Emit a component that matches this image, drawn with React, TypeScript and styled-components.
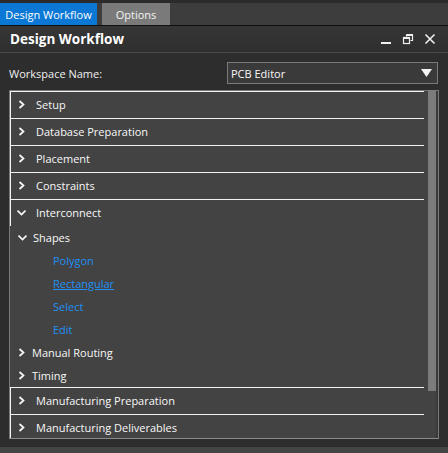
import React from "react";
import styled, { createGlobalStyle } from "styled-components";

const Global = createGlobalStyle`
  html, body { margin: 0; padding: 0; background: #2d2d2d; }
  body { font-family: "Open Sans", "Noto Sans", sans-serif; color: #f0f0f0; }
  * { box-sizing: border-box; }
`;

const Page = styled.div`
  width: 448px;
  height: 453px;
  display: flex;
  flex-direction: column;
  background: #2d2d2d;
  overflow: hidden;
`;

const TabStrip = styled.div`
  padding-top: 3px;
  background: #2b2b2b;
`;

const TabRow = styled.div`
  height: 23px;
  display: flex;
  gap: 5px;
  background: #3d3d3d;
  border-bottom: 1px solid #101010;
`;

const Tab = styled.div<{ $active?: boolean; $w: number }>`
  width: ${(p) => p.$w}px;
  height: 22px;
  display: flex;
  align-items: center;
  justify-content: center;
  font-size: 11px;
  color: ${(p) => (p.$active ? "#ffffff" : "#f4f4f4")};
  background: ${(p) => (p.$active ? "#0a78d4" : "#7a7a7a")};
`;

const Header = styled.div`
  height: 27px;
  display: flex;
  align-items: center;
  padding: 0 10px;
  background: linear-gradient(#363636, #2f2f2f);
  border-bottom: 1px solid #4a4a4a;
`;

const Title = styled.div`
  flex: 1;
  font-size: 13.5px;
  font-weight: 700;
  color: #ffffff;
`;

const WinButtons = styled.div`
  display: flex;
  align-items: center;
  gap: 10px;
  margin-right: 2px;
`;

const WinBtn = styled.svg`
  width: 12px;
  height: 12px;
  display: block;
`;

const WorkspaceRow = styled.div`
  display: flex;
  align-items: center;
  justify-content: space-between;
  padding: 9px 10px 0 9px;
  height: 31px;
`;

const Label = styled.div`
  font-size: 11px;
  color: #f0f0f0;
`;

const Select = styled.div`
  width: 211px;
  height: 22px;
  border: 1px solid #7a7a7a;
  background: #3a3a3a;
  display: flex;
  align-items: center;
  justify-content: space-between;
  padding: 0 5px 0 3px;
  font-size: 11px;
  color: #f8f8f8;
`;

const Panel = styled.div`
  margin: 6px 9px 0 9px;
  height: 349px;
  border: 1px solid #7a7a7a;
  border-bottom-color: #8a8a8a;
  background: #434343;
  display: flex;
  overflow: hidden;
`;

const List = styled.div`
  flex: 1;
  display: flex;
  flex-direction: column;
`;

const TopRow = styled.div`
  height: 27px;
  flex: none;
  margin-right: 2px;
  border-top: 1px solid #f2f2f2;
  border-left: 1px solid #f2f2f2;
  display: flex;
  align-items: center;
  padding-left: 6px;
  padding-bottom: 1px;
  font-size: 11px;
  color: #f8f8f8;
`;

const SubRow = styled.div<{ $indent: number }>`
  height: 23px;
  flex: none;
  display: flex;
  align-items: center;
  padding-left: ${(p) => p.$indent}px;
  font-size: 11px;
  color: #f8f8f8;
`;

const Chevron = styled.svg<{ $gap: number }>`
  width: 9px;
  height: 9px;
  flex: none;
  margin-right: ${(p) => p.$gap}px;
  display: block;
`;

const LinkRow = styled.div`
  height: 23px;
  flex: none;
  display: flex;
  align-items: center;
  padding-left: 43px;
`;

const Link = styled.span<{ $underline?: boolean }>`
  font-size: 11px;
  color: #2090f4;
  text-decoration: ${(p) => (p.$underline ? "underline" : "none")};
`;

const Track = styled.div`
  width: 12px;
  flex: none;
  display: flex;
  padding-left: 2px;
  border-right: 2px solid #3a3a3a;
`;

const Thumb = styled.div`
  width: 8px;
  height: 300px;
  background: #7c7c7c;
`;

const Spacer = styled.div`
  flex: 1;
`;

const BottomStrip = styled.div`
  height: 6px;
  background: #444444;
`;

const Right = ({ gap }: { gap: number }) => (
  <Chevron $gap={gap} viewBox="0 0 9 9">
    <path d="M2.5 1 L6.5 4.5 L2.5 8" fill="none" stroke="#f8f8f8" strokeWidth="1.7" />
  </Chevron>
);

const Down = ({ gap }: { gap: number }) => (
  <Chevron $gap={gap} viewBox="0 0 9 9">
    <path d="M0.5 2.5 L4.5 6.5 L8.5 2.5" fill="none" stroke="#f8f8f8" strokeWidth="1.7" />
  </Chevron>
);

const Top = ({ label, open }: { label: string; open?: boolean }) => (
  <TopRow>
    {open ? <Down gap={10} /> : <Right gap={10} />}
    {label}
  </TopRow>
);

export default function App() {
  return (
    <Page>
      <Global />
      <TabStrip>
        <TabRow>
          <Tab $active $w={97}>Design Workflow</Tab>
          <Tab $w={68}>Options</Tab>
        </TabRow>
      </TabStrip>
      <Header>
        <Title>Design Workflow</Title>
        <WinButtons>
          <WinBtn viewBox="0 0 12 12">
            <rect x="1" y="9" width="10" height="2" fill="#f0f0f0" />
          </WinBtn>
          <WinBtn viewBox="0 0 12 12">
            <path d="M4.5 1.5 H10.5 V7.5 H8.5 M4.5 3.5 V1.5" fill="none" stroke="#f0f0f0" strokeWidth="1.2" />
            <rect x="1.5" y="4.5" width="6" height="6" fill="none" stroke="#f0f0f0" strokeWidth="1.2" />
            <rect x="1.5" y="4.5" width="6" height="1.5" fill="#f0f0f0" />
            <rect x="4.5" y="1.5" width="6" height="1.5" fill="#f0f0f0" />
          </WinBtn>
          <WinBtn viewBox="0 0 12 12">
            <path d="M1.5 1.5 L10.5 10.5 M10.5 1.5 L1.5 10.5" stroke="#f4f4f4" strokeWidth="1.5" />
          </WinBtn>
        </WinButtons>
      </Header>
      <WorkspaceRow>
        <Label>Workspace Name:</Label>
        <Select>
          PCB Editor
          <svg width="11" height="8" viewBox="0 0 11 8">
            <path d="M0 0 H11 L5.5 8 Z" fill="#f4f4f4" />
          </svg>
        </Select>
      </WorkspaceRow>
      <Panel>
        <List>
          <Top label="Setup" />
          <Top label="Database Preparation" />
          <Top label="Placement" />
          <Top label="Constraints" />
          <Top label="Interconnect" open />
          <SubRow $indent={8}>
            <Down gap={6} />
            Shapes
          </SubRow>
          <LinkRow><Link>Polygon</Link></LinkRow>
          <LinkRow><Link $underline>Rectangular</Link></LinkRow>
          <LinkRow><Link>Select</Link></LinkRow>
          <LinkRow><Link>Edit</Link></LinkRow>
          <SubRow $indent={7}>
            <Right gap={6} />
            Manual Routing
          </SubRow>
          <SubRow $indent={7}>
            <Right gap={6} />
            Timing
          </SubRow>
          <Top label="Manufacturing Preparation" />
          <Top label="Manufacturing Deliverables" />
        </List>
        <Track>
          <Thumb />
        </Track>
      </Panel>
      <Spacer />
      <BottomStrip />
    </Page>
  );
}
